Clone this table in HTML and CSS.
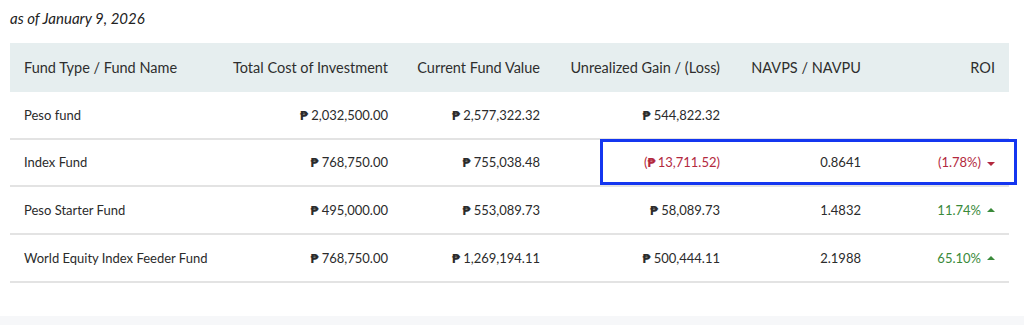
FILE: index.html
```html
<!DOCTYPE html>
<html>
<head>
<meta charset="utf-8">
<link rel="stylesheet" href="styles.css">
</head>
<body>
<div class="page">
  <p class="asof">as of January 9, 2026</p>
  <div class="table-wrap">
    <table class="funds">
      <colgroup>
        <col class="c1"><col class="c2"><col class="c3"><col class="c4"><col class="c5"><col class="c6">
      </colgroup>
      <thead>
        <tr>
          <th class="left">Fund Type / Fund Name</th>
          <th>Total Cost of Investment</th>
          <th>Current Fund Value</th>
          <th>Unrealized Gain / (Loss)</th>
          <th>NAVPS / NAVPU</th>
          <th>ROI</th>
        </tr>
      </thead>
      <tbody>
        <tr>
          <td class="left">Peso fund</td>
          <td><span class="peso">₱</span>2,032,500.00</td>
          <td><span class="peso">₱</span>2,577,322.32</td>
          <td><span class="peso">₱</span>544,822.32</td>
          <td></td>
          <td></td>
        </tr>
        <tr>
          <td class="left">Index Fund</td>
          <td><span class="peso">₱</span>768,750.00</td>
          <td><span class="peso">₱</span>755,038.48</td>
          <td class="neg">(<span class="peso">₱</span>13,711.52)</td>
          <td>0.8641</td>
          <td class="neg">(1.78%)<span class="tri down"></span></td>
        </tr>
        <tr>
          <td class="left">Peso Starter Fund</td>
          <td><span class="peso">₱</span>495,000.00</td>
          <td><span class="peso">₱</span>553,089.73</td>
          <td><span class="peso">₱</span>58,089.73</td>
          <td>1.4832</td>
          <td class="pos">11.74%<span class="tri up"></span></td>
        </tr>
        <tr>
          <td class="left">World Equity Index Feeder Fund</td>
          <td><span class="peso">₱</span>768,750.00</td>
          <td><span class="peso">₱</span>1,269,194.11</td>
          <td><span class="peso">₱</span>500,444.11</td>
          <td>2.1988</td>
          <td class="pos">65.10%<span class="tri up"></span></td>
        </tr>
      </tbody>
    </table>
    <div class="highlight"></div>
  </div>
</div>
<div class="footer-band"></div>
</body>
</html>
```

FILE: styles.css
```css
html, body {
  margin: 0;
  padding: 0;
  background: #ffffff;
}
body {
  font-family: Lato, "Noto Sans", "DejaVu Sans", sans-serif;
  color: #2b2b2b;
  width: 1024px;
  height: 325px;
  overflow: hidden;
  position: relative;
}
.page {
  padding: 8px 15px 0 10px;
}
.asof {
  margin: 0;
  font-style: italic;
  font-size: 15px;
  line-height: 20px;
  color: #222;
}
.table-wrap {
  position: relative;
  margin-top: 15px;
}
.funds {
  width: 999px;
  border-collapse: collapse;
  table-layout: fixed;
  font-size: 13px;
}
.c1 { width: 202px; }
.c2 { width: 190px; }
.c3 { width: 152px; }
.c4 { width: 180px; }
.c5 { width: 141px; }
.c6 { width: 134px; }
.funds th {
  background: #e6eeef;
  font-weight: 400;
  font-size: 14.5px;
  color: #2e2e2e;
  height: 49px;
  padding: 0 14px;
  text-align: right;
  white-space: nowrap;
}
.funds td {
  height: 45.67px;
  padding: 0 14px;
  text-align: right;
  border-bottom: 2px solid #e3e3e3;
  white-space: nowrap;
  color: #2b2b2b;
}
.funds .left {
  text-align: left;
}
.peso {
  font-family: "DejaVu Sans", sans-serif;
  font-size: 12px;
  font-weight: 700;
  margin-right: 3px;
}
.funds td.neg { color: #b3293e; }
.funds td.pos { color: #3a8a3a; }
.neg .peso { margin-right: 2px; }
.tri {
  display: inline-block;
  width: 0;
  height: 0;
  margin-left: 6px;
  vertical-align: middle;
  border-left: 4px solid transparent;
  border-right: 4px solid transparent;
}
.tri.down {
  border-top: 4px solid #b3293e;
}
.tri.up {
  border-bottom: 4px solid #3a8a3a;
  position: relative;
  top: -2px;
}
.highlight {
  position: absolute;
  left: 590px;
  top: 96px;
  width: 411px;
  height: 40px;
  border: 3px solid #1436f0;
  pointer-events: none;
}
.footer-band {
  position: absolute;
  left: 0;
  right: 0;
  bottom: 0;
  height: 9px;
  background: #f6f7f9;
}
```
